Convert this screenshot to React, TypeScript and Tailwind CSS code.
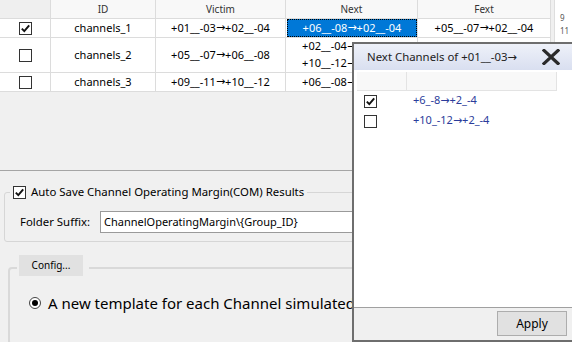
import React from "react";

type Row = {
  id: string;
  checked?: boolean;
  victim: string;
  next: string[];
  fext: string;
  tall?: boolean;
  selected?: boolean;
};

const rows: Row[] = [
  { id: "channels_1", checked: true, victim: "+01__-03→+02__-04", next: ["+06__-08→+02__-04"], fext: "+05__-07→+02__-04", selected: true },
  { id: "channels_2", victim: "+05__-07→+06__-08", next: ["+02__-04→+06__-08", "+10__-12→+06__-08"], fext: "+01__-03→+06__-08", tall: true },
  { id: "channels_3", victim: "+09__-11→+10__-12", next: ["+06__-08→+10__-12"], fext: "+05__-07→+10__-12" },
];

const nextChannels = [
  { label: "+6_-8→+2_-4", checked: true },
  { label: "+10_-12→+2_-4", checked: false },
];

// the arrow in Noto Sans is tiny, borrow DejaVu's wider one
function Arrowed({ text }: { text: string }) {
  const parts = text.split("→");
  return (
    <>
      {parts.map((p, i) => (
        <React.Fragment key={i}>
          {p}
          {i < parts.length - 1 && <span className="font-['DejaVu_Sans',sans-serif]">→</span>}
        </React.Fragment>
      ))}
    </>
  );
}

function Check({ checked }: { checked?: boolean }) {
  return (
    <span className="inline-flex h-[13px] w-[13px] shrink-0 items-center justify-center border border-[#333] bg-white">
      {checked && (
        <svg width="11" height="11" viewBox="0 0 11 11">
          <path d="M1.8 5.6 L4.3 8.2 L9.2 2.4" fill="none" stroke="#111" strokeWidth="1.9" />
        </svg>
      )}
    </span>
  );
}

function Cell({ children, className = "" }: { children?: React.ReactNode; className?: string }) {
  return (
    <div className={`flex items-center justify-center border-r border-b border-[#dcdcdc] bg-white text-[11px] whitespace-nowrap text-black ${className}`}>
      {children}
    </div>
  );
}

export default function App() {
  return (
    <div className="relative h-[342px] w-[572px] overflow-hidden bg-[#f0f0f0] font-['Noto_Sans',sans-serif] select-none">
      {/* top grid */}
      <div className="flex">
        <div className="h-[171px] w-[551px] border-b border-[#a5a5a5]">
          <div className="grid grid-cols-[51px_105px_130px_132px_133px]">
            <div className="h-[19px] border-r border-b border-[#dcdcdc] bg-[#efefef]" />
            {["ID", "Victim", "Next", "Fext"].map((h) => (
              <div
                key={h}
                className="flex h-[19px] items-center justify-center border-r border-b border-[#dcdcdc] bg-[#f8f8f8] text-[10px] text-[#333]"
              >
                {h}
              </div>
            ))}

            {rows.map((r) => {
              const h = r.tall ? "h-[35px]" : "h-[19px]";
              return (
                <React.Fragment key={r.id}>
                  <Cell className={h}>
                    <Check checked={r.checked} />
                  </Cell>
                  <Cell className={h}>{r.id}</Cell>
                  <Cell className={h}>
                    <Arrowed text={r.victim} />
                  </Cell>
                  {r.selected ? (
                    <Cell className={`${h} pl-px`}>
                      <div className="flex h-full flex-1 items-center justify-center border border-dotted border-black bg-[#0078d7] text-white">
                        <Arrowed text={r.next[0]} />
                      </div>
                    </Cell>
                  ) : (
                    <Cell className={`${h} flex-col leading-[16px]`}>
                      {r.next.map((n) => (
                        <span key={n}>
                          <Arrowed text={n} />
                        </span>
                      ))}
                    </Cell>
                  )}
                  <Cell className={h}>
                    <Arrowed text={r.fext} />
                  </Cell>
                </React.Fragment>
              );
            })}
          </div>
        </div>
        <div className="flex h-[171px] flex-1">
          <div className="w-[3px] bg-[#f0f0f0]" />
          <div className="flex flex-1 flex-col border-l border-[#dedede] bg-white pl-[5px] pt-[11px] text-[8px] leading-[13px] text-[#555]">
            <span>9</span>
            <span>11</span>
          </div>
        </div>
      </div>

      {/* auto save group */}
      <fieldset className="mt-[13px] ml-[4px] w-[560px] rounded-[3px] border border-[#d6d6d6] pb-[8px]">
        <legend className="ml-[5px] flex items-center gap-[5px] px-[3px] text-[11.4px] leading-[16px] text-black">
          <Check checked />
          <span>Auto Save Channel Operating Margin(COM) Results</span>
        </legend>
        <div className="mt-[11px] flex items-center pl-[15px]">
          <span className="w-[80px] text-[11.4px] text-black">Folder Suffix:</span>
          <div className="flex h-[22px] w-[330px] items-center border border-[#9a9a9a] bg-white pl-[3px] text-[11px] text-black">
            ChannelOperatingMargin\{"{"}Group_ID{"}"}
          </div>
        </div>
      </fieldset>

      {/* config group */}
      <fieldset className="mt-[13px] ml-[8px] h-[90px] w-[560px] rounded-[4px] border-2 border-[#d9d9d9]">
        <legend className="ml-[7px] pl-[2px] pr-[6px] pb-[5px]">
          <div className="flex h-[21px] w-[64px] items-center justify-center bg-[#e1e1e1] text-[10px] text-black">
            Config...
          </div>
        </legend>
        <div className="mt-[11px] flex items-center gap-[7px] pl-[19px]">
          <span className="flex h-[12px] w-[12px] items-center justify-center rounded-full border border-[#444] bg-white">
            <span className="h-[6px] w-[6px] rounded-full bg-black" />
          </span>
          <span className="whitespace-nowrap text-[15px] leading-[22px] text-black">
            A new template for each Channel simulated
          </span>
        </div>
      </fieldset>

      {/* popup */}
      <div className="absolute top-[42px] left-[352px] flex h-[300px] w-[224px] flex-col border-2 border-[#6e6e6e] bg-white">
        <div className="flex h-[26px] items-center justify-between bg-gradient-to-b from-[#eef1f9] to-[#d9dff0] pr-[14px] pl-[13px]">
          <span className="text-[11.4px] text-[#222]">
            <Arrowed text="Next Channels of +01__-03→" />
          </span>
          <svg width="18" height="16" viewBox="0 0 18 16">
            <path d="M2 1.5 L16 14.5 M16 1.5 L2 14.5" stroke="#2a2a2a" strokeWidth="3.2" strokeLinecap="square" />
          </svg>
        </div>
        <div className="mt-[2px] ml-[3px] flex h-[19px] w-[200px] border-r border-b border-[#e3e3e3] bg-[#f8f8f8]">
          <div className="w-[50px] border-r border-[#e3e3e3]" />
        </div>
        {nextChannels.map((c) => (
          <div key={c.label} className="ml-[3px] flex h-[20px] items-center">
            <div className="flex w-[50px] pl-[7px]">
              <Check checked={c.checked} />
            </div>
            <span className="pl-[6px] text-[11px] text-[#2b3c9b]">
              <Arrowed text={c.label} />
            </span>
          </div>
        ))}
        <div className="mt-auto h-[33px] border-t border-[#a0a0a0] bg-[#f0f0f0] pt-[3px] pl-[143px]">
          <div className="flex h-[25px] w-[70px] items-center justify-center border border-[#adadad] bg-[#e1e1e1] text-[12px] text-black">
            Apply
          </div>
        </div>
      </div>
    </div>
  );
}
